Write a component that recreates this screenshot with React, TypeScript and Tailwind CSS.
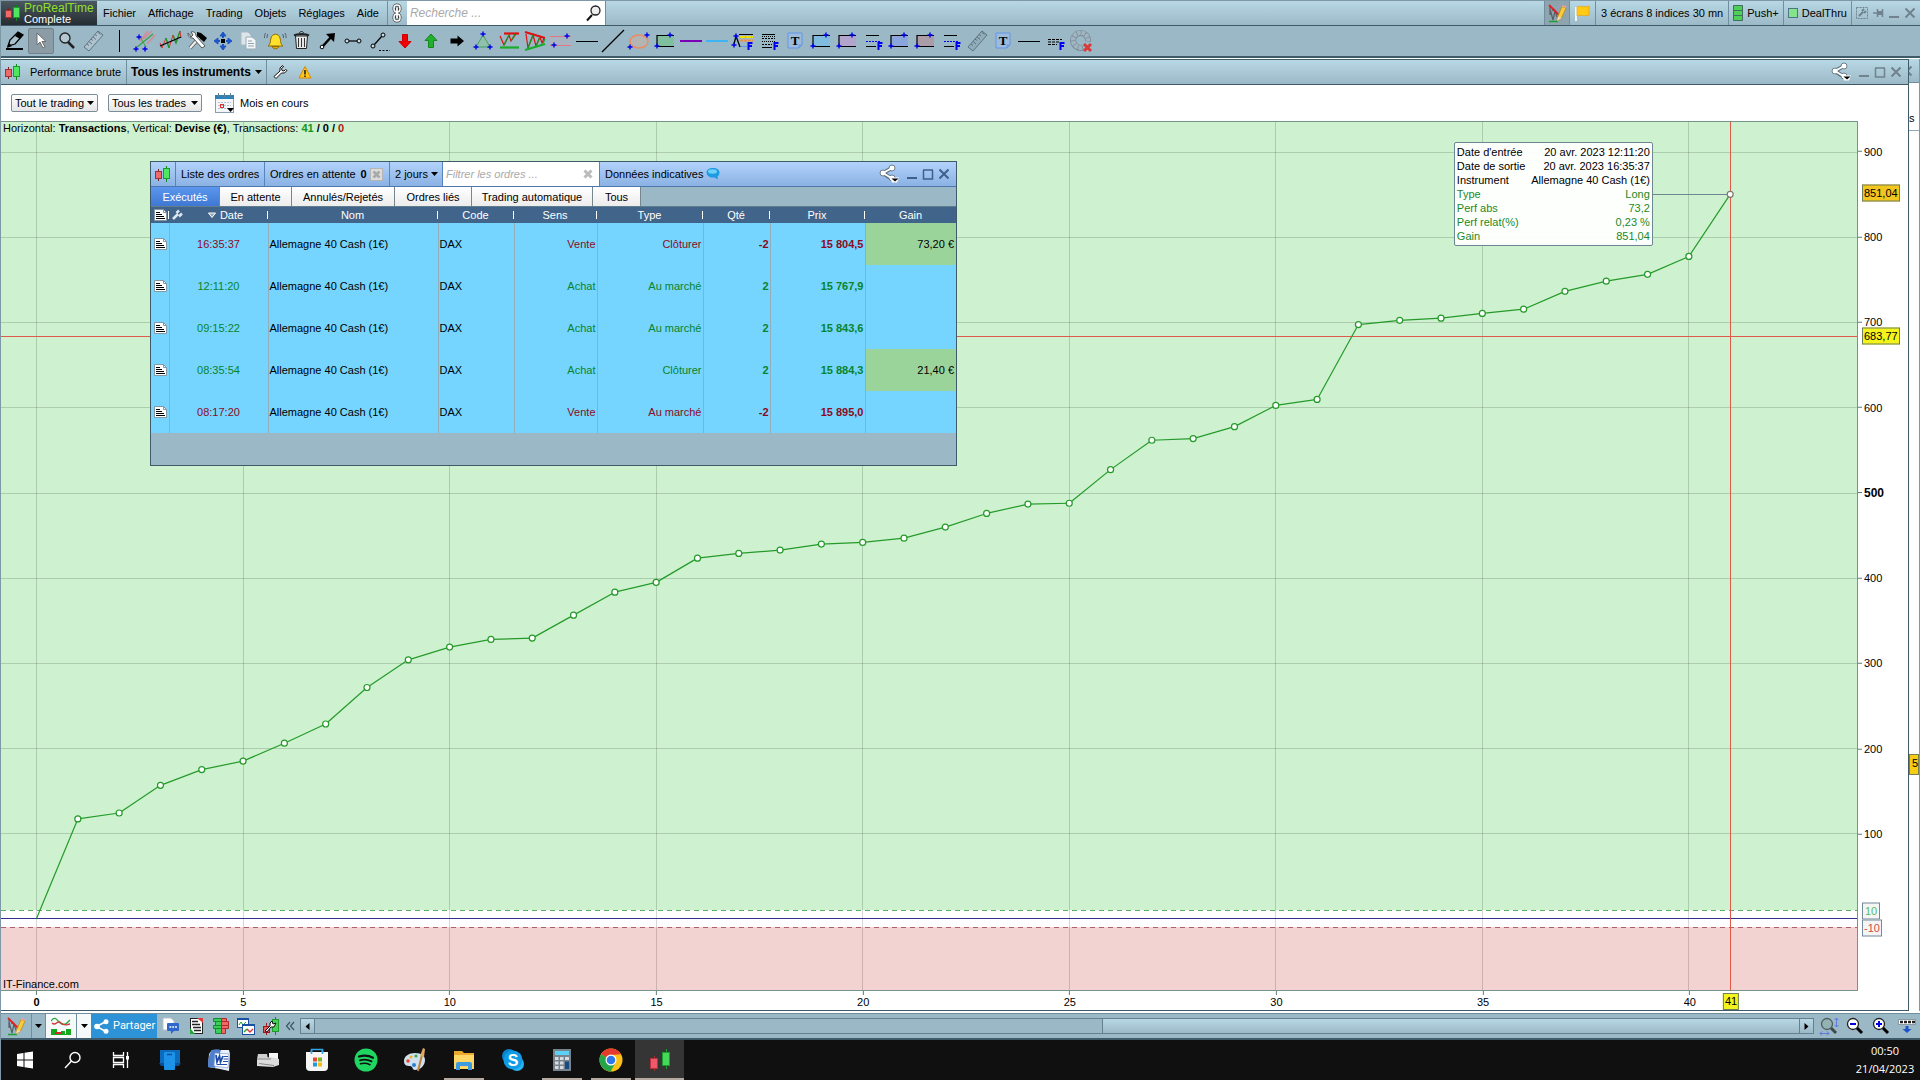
import { Fragment, type ReactNode } from "react";
import { clsx } from "clsx";

const GAINS = [
  0, 117, 124, 156.5, 175, 185, 206, 228.6, 271.5, 304, 319, 328, 329.5, 356.5, 383.5, 395, 423.5, 429, 433, 440, 442,
  447, 460, 476, 487, 488, 527.5, 562, 564, 578, 603, 610, 698, 703, 705.5, 711, 716, 737, 749, 757, 778, 851.04,
];

const Y_TOP = 936;
const Y_SPAN = 1020;
const X_LEFT = -0.86;
const X_SPAN = 44.93;

const px = (trade: number) => `${((trade - X_LEFT) / X_SPAN) * 100}%`;
const py = (value: number) => `${((Y_TOP - value) / Y_SPAN) * 100}%`;

const HEADER_BG = "bg-linear-to-b from-[#b8d8e5] to-[#9cb9c7]";

const Icon = ({ size = 24, className, children }: { size?: number; className?: string; children: ReactNode }) => (
  <svg
    width={size}
    height={size}
    viewBox={`0 0 ${size} ${size}`}
    fill="none"
    className={clsx("shrink-0", className)}
    aria-hidden="true"
  >
    {children}
  </svg>
);

/* ---------- shared icons ---------- */

const Candles = ({ className }: { className?: string }) => (
  <Icon size={18} className={className}>
    <path d="M4.500 4v12" stroke="#7d2020" />
    <rect x="1.500" y="6.500" width="6" height="7" fill="#ee6a6a" stroke="#a33030" />
    <path d="M12.500 1v16" stroke="#0d8a1c" />
    <rect x="9.500" y="3.500" width="6" height="10" fill="#4fe75f" stroke="#1d9a2c" />
  </Icon>
);

const Caret = ({ className }: { className?: string }) => (
  <svg width="7" height="4" viewBox="0 0 7 4" className={clsx("shrink-0", className)} aria-hidden="true">
    <path d="M0 0h7L3.500 4z" fill="currentColor" />
  </svg>
);

const Share = () => (
  <Icon size={20}>
    <path d="M4 9 13 4M4 9l9 6" stroke="#5b6f7b" strokeWidth="4" />
    <g fill="#fff" stroke="#6d7f8a">
      <circle cx="4" cy="9" r="3" />
      <circle cx="13" cy="4" r="3" />
      <circle cx="13" cy="14" r="3" />
    </g>
    <path d="M4 9 13 4M4 9l9 5.500" stroke="#fff" strokeWidth="2" />
    <path d="M11 13.500h9l-2 5h-5z" fill="#fff" />
    <path d="M12.500 14.500h7l-3.500 3z" fill="#000" />
  </Icon>
);

const Wrench = () => (
  <Icon size={16}>
    <path
      d="M10.500 1.500 8 4v3L2 12.500 4 14.500 9.500 9h3L15 6.500 13.500 5.500 12 7 10 6.500 9.500 4.500 11.500 3z"
      fill="#fff"
      stroke="#111"
    />
  </Icon>
);

const Sketch = () => (
  <Icon size={22}>
    <path d="M3 19.500h9" stroke="#1aa035" strokeWidth="1.500" />
    <path d="M4 5v8M4 7l3 11L9 9l3 9M9 9 6 8" stroke="#555f66" strokeWidth="1.200" />
    <path d="m3 3 10 10" stroke="#e02020" strokeWidth="1.800" />
    <path d="m11 19 1-5 4-9.500 4 1.500-4.500 10z" fill="#f9cc3c" stroke="#b98a18" strokeWidth=".8" />
    <path d="m11 19 1-4.500 3.500 1.500z" fill="#f2ddb4" />
    <path d="m16 4.500.6-1.600 4 1.500-.6 1.600z" fill="#f0a0a0" />
  </Icon>
);

const Close = ({ className }: { className?: string }) => (
  <Icon size={12} className={className}>
    <path d="m1.500 1.500 9 9M10.500 1.500l-9 9" stroke="currentColor" strokeWidth="2" />
  </Icon>
);

const Minimize = () => (
  <Icon size={12}>
    <path d="M1 10h10" stroke="currentColor" strokeWidth="2" />
  </Icon>
);

const Maximize = () => (
  <Icon size={12}>
    <path d="M1.500 2v9h9V2M1 2h10" stroke="currentColor" strokeWidth="1.500" />
  </Icon>
);

const WindowButtons = ({ className }: { className?: string }) => (
  <div className={clsx("flex items-center gap-1", className)}>
    <button type="button" aria-label="Réduire">
      <Minimize />
    </button>
    <button type="button" aria-label="Agrandir">
      <Maximize />
    </button>
    <button type="button" aria-label="Fermer">
      <Close />
    </button>
  </div>
);

/* ---------- drawing tools ---------- */

const Plus = ({ x, y }: { x: number; y: number }) => (
  <path d={`M${x - 2.5} ${y}h5M${x} ${y - 2.5}v5`} stroke="#0000e8" strokeWidth="1.400" />
);

const LetterF = () => <path d="M17.500 21v-8M16.500 14h5M17 17h4" stroke="#0000f0" strokeWidth="2" />;

const Ruler = ({ fill }: { fill: string }) => (
  <>
    <path d="M3 18 17 2l5 4L8 22z" fill={fill} stroke="#5f7480" />
    <path d="m6 15 2 1.500M8 12.500l3 2.500M10 10l2 1.500M12 8l3 2.500M14 5.500l2 1.500M16.500 3l3 2.500" stroke="#5f7480" />
  </>
);

const RectTool = ({ fill }: { fill: string }) => (
  <>
    <path d="M4 7h17v10H4z" fill={fill} />
    <path d="M21 6.500H4v11M4 17.500h17" stroke="#000" strokeWidth="1.200" />
    <Plus x={17} y={6} />
    <Plus x={4} y={17} />
  </>
);

const LinesF = () => (
  <>
    <path d="M5 6.500h13M5 17.500h10" stroke="#000" />
    <path d="M5 12.500h14" stroke="#00f" strokeDasharray="2 1" />
    <LetterF />
  </>
);

const TextTool = () => (
  <>
    <path d="M5 4h14v12l-3 3H5z" fill="#9dbcdc" stroke="#6395ea" />
    <path d="M16 19v-3h3" stroke="#6395ea" />
    <text x="12" y="16" textAnchor="middle" fontSize="13" fontWeight="700" fontFamily="Liberation Serif, serif" fill="#000">
      T
    </text>
  </>
);

const TOOLS: { label: string; draw: ReactNode }[] = [
  {
    label: "Crayon",
    draw: (
      <>
        <path d="m5 17 2-6 8-8 5 3-8 9z" fill="#a9c2ce" stroke="#000" strokeWidth="1.300" />
        <path d="m15 3 5 3-3 4-5-3z" fill="#000" />
        <path d="m4 19 2-5 3 3z" fill="#000" />
        <path d="M3 20h17" stroke="#000" strokeWidth="2" />
      </>
    ),
  },
  {
    label: "Curseur",
    draw: <path d="M8 4v12l3-3 3 6 2-1-3-5.500h4z" fill="#fff" stroke="#6c6c6c" />,
  },
  {
    label: "Loupe",
    draw: (
      <>
        <path d="m13 13 6 6" stroke="#222" strokeWidth="2.500" />
        <circle cx="10" cy="9" r="5" fill="#b5c8d1" stroke="#222" strokeWidth="1.300" />
      </>
    ),
  },
  { label: "Règle", draw: <Ruler fill="#adc4cf" /> },
  { label: "Séparateur", draw: <path d="M12.500 1v22" stroke="#000" /> },
  {
    label: "Fourchette",
    draw: (
      <>
        <path d="M7 12 15 2M10 10l9-8M14 15l8-9" stroke="#d68a96" strokeWidth="1.500" />
        <path d="m3 19 17-14" stroke="#3ba043" strokeWidth="1.200" />
        <path d="m7 8 6 10" stroke="#3ba043" />
        <Plus x={6} y={8} />
        <Plus x={3} y={20} />
        <Plus x={12} y={20} />
      </>
    ),
  },
  {
    label: "Régression",
    draw: (
      <>
        <path d="m1 14 2 5 4-10 3 10 4-13 3 8 4-12 1 7" stroke="#e03030" />
        <path d="m7 9 3 10M14 6l3 8 4-12" stroke="#1a9c2c" strokeWidth="1.300" />
        <path d="m1 17 21-9" stroke="#000" strokeWidth="1.300" />
      </>
    ),
  },
  {
    label: "Outils",
    draw: (
      <>
        <path d="m5 19 10-11" stroke="#666" strokeWidth="4" />
        <path d="m5 19 10-11" stroke="#f2f2f2" strokeWidth="2" />
        <path d="m12 3 4 1 6 5-3 4-7-6z" fill="#000" />
        <path d="M3 4c0 4 2 5 5 5l9 10 3-2L11 7c0-3-2-5-5-4l2 3-2 2z" fill="#fff" stroke="#555" />
      </>
    ),
  },
  {
    label: "Déplacer",
    draw: (
      <>
        <path d="m12 3 3 4H9zM12 21l3-4H9zM3 12l4-3v6zM21 12l-4-3v6z" fill="#1e55c4" stroke="#1e55c4" />
        <path d="M12 6v3M12 15v3M6 12h3M15 12h3" stroke="#1e55c4" strokeWidth="2" />
        <rect x="10" y="10" width="4" height="4" fill="#000" />
      </>
    ),
  },
  {
    label: "Copier",
    draw: (
      <>
        <path d="M4 3h7l3 3v10H4z" fill="#dbe5ea" stroke="#aabac3" />
        <path d="M9 8h6l4 3v9H9z" fill="#f3f7f9" stroke="#99adb8" />
        <path d="M11 12h4M11 14.500h6M11 17h6" stroke="#91a5b0" />
      </>
    ),
  },
  {
    label: "Alarme",
    draw: (
      <>
        <path d="M5 17c3-2 2-5 3-8 1-5 8-5 9 0 1 3 0 6 3 8z" fill="#ffe02c" stroke="#8d6c00" />
        <path d="M9 17.500c1 3 6 3 7 0z" fill="#e9a800" stroke="#8d6c00" />
        <path d="M5 5c-1 1-1 3-1 4M2.500 4c-1 2-1 3-1 5M19.500 5c1 1 1 3 1 4M22 4c1 2 1 3 1 5" stroke="#4f606a" />
      </>
    ),
  },
  {
    label: "Supprimer",
    draw: (
      <>
        <path d="M6.500 7h12L17.500 19.500h-10z" fill="#e8e8e8" stroke="#222" />
        <path d="M9.500 9v9M12.500 9v9M15.500 9v9" stroke="#333" />
        <path d="M5 6.500c3-2 12-2 15 0" stroke="#222" strokeWidth="2" />
        <path d="M10.500 4c0-2 4-2 4 0" stroke="#222" />
      </>
    ),
  },
  {
    label: "Flèche",
    draw: (
      <>
        <path d="m8 17 9-10" stroke="#000" strokeWidth="2.500" />
        <path d="m11 5 9-1-1 9z" fill="#000" />
        <circle cx="7" cy="18" r="1.800" fill="#fff" stroke="#000" />
      </>
    ),
  },
  {
    label: "Segment",
    draw: (
      <>
        <path d="M7 12h10" stroke="#000" strokeWidth="1.200" />
        <circle cx="6" cy="12" r="2" fill="#c5dbe5" stroke="#000" />
        <circle cx="18" cy="12" r="2" fill="#c5dbe5" stroke="#000" />
      </>
    ),
  },
  {
    label: "Demi-droite",
    draw: (
      <>
        <path d="m7 16 8-9" stroke="#000" strokeWidth="1.200" />
        <circle cx="6" cy="17" r="2" fill="#c5dbe5" stroke="#000" />
        <circle cx="16" cy="6" r="2" fill="#c5dbe5" stroke="#000" />
        <path d="M12 21.500h11" stroke="#000" strokeDasharray="2 1.500" />
      </>
    ),
  },
  { label: "Baisse", draw: <path d="M9.500 5.500h5v7H18l-6 6.500-6-6.500h3.500z" fill="#f20000" stroke="#c00" /> },
  { label: "Hausse", draw: <path d="M9.500 18.500h5v-7H18L12 5l-6 6.500h3.500z" fill="#25ad2e" stroke="#128a1d" /> },
  { label: "Flèche droite", draw: <path d="M5.500 9.500h7V6.500L19 12l-6.500 5.500v-3h-7z" fill="#000" /> },
  {
    label: "Triangle",
    draw: (
      <>
        <path d="m12 6 7 12H5z" fill="#92c0ae" stroke="#44a05a" />
        <Plus x={12} y={5} />
        <Plus x={5} y={18} />
        <Plus x={19} y={18} />
      </>
    ),
  },
  {
    label: "Rectangle automatique",
    draw: (
      <>
        <path d="M7 4.500h15" stroke="#e01010" strokeWidth="2.200" />
        <path d="m3 7 4 9 5-10 2 6 5-7" stroke="#e01010" strokeWidth="1.200" />
        <path d="m7 16 5-10M14 12l4-7" stroke="#159525" strokeWidth="1.200" />
        <path d="M3 18.500h19" stroke="#18ad28" strokeWidth="2.200" />
      </>
    ),
  },
  {
    label: "Triangle automatique",
    draw: (
      <>
        <path d="m2 3 20 6" stroke="#e01010" strokeWidth="2.200" />
        <path d="m3 5 2 14 5-13 3 11 4-9 2 6 2-5" stroke="#e01010" strokeWidth="1.200" />
        <path d="m5 19 5-13M13 17l4-9M20 14l2-4" stroke="#159525" strokeWidth="1.200" />
        <path d="m2 21 20-6" stroke="#18ad28" strokeWidth="2.200" />
      </>
    ),
  },
  {
    label: "Canal",
    draw: (
      <>
        <path d="M1 8h21v9H1z" fill="#a9b4c2" />
        <path d="M1 7.500h21M1 16.500h21" stroke="#df7880" strokeWidth="1.200" />
        <Plus x={18} y={7} />
        <Plus x={5} y={16} />
      </>
    ),
  },
  { label: "Ligne horizontale", draw: <path d="M1 12.500h22" stroke="#000" /> },
  { label: "Droite", draw: <path d="M1 23 23 1" stroke="#000" strokeWidth="1.200" /> },
  {
    label: "Ellipse",
    draw: (
      <>
        <ellipse cx="12" cy="12.500" rx="9" ry="6.500" fill="#b4b4b3" stroke="#ec8a62" strokeWidth="1.400" />
        <Plus x={20} y={6} />
        <Plus x={3} y={18} />
      </>
    ),
  },
  { label: "Rectangle vert", draw: <RectTool fill="#7fbf9e" /> },
  { label: "Ligne violette", draw: <path d="M1 12h22" stroke="#7a00b8" strokeWidth="2" /> },
  { label: "Ligne bleue", draw: <path d="M1 12h22" stroke="#3fb4f2" strokeWidth="2" /> },
  {
    label: "Fibonacci",
    draw: (
      <>
        <path d="M8 5.500h14" stroke="#000" />
        <path d="M9 8h13" stroke="#f0e000" strokeWidth="2" strokeDasharray="5 1" />
        <path d="M9 11.500h13" stroke="#e89050" strokeWidth="2" strokeDasharray="3 1" />
        <path d="M10 17.500h6" stroke="#6090f0" />
        <path d="m3 15 2-8 4 11" stroke="#000" strokeWidth="1.300" />
        <Plus x={5} y={7} />
        <Plus x={3} y={16} />
        <LetterF />
      </>
    ),
  },
  {
    label: "Retracements",
    draw: (
      <>
        <path d="M5 5.500h13M5 18.500h10" stroke="#000" />
        <path d="M5 9.500h13M5 15.500h10" stroke="#000" strokeDasharray="2 1" />
        <path d="M5 12.500h13M5 7.500h13" stroke="#000" strokeDasharray="1 1" />
        <LetterF />
      </>
    ),
  },
  { label: "Texte", draw: <TextTool /> },
  { label: "Rectangle bleu", draw: <RectTool fill="#7fbce0" /> },
  { label: "Rectangle mauve", draw: <RectTool fill="#b3a4cd" /> },
  { label: "Niveaux", draw: <LinesF /> },
  { label: "Rectangle indigo", draw: <RectTool fill="#8aa6dd" /> },
  { label: "Rectangle rose", draw: <RectTool fill="#ab9da8" /> },
  { label: "Niveaux 2", draw: <LinesF /> },
  { label: "Règle 2", draw: <Ruler fill="#91acba" /> },
  { label: "Texte 2", draw: <TextTool /> },
  { label: "Ligne 2", draw: <path d="M1 12.500h22" stroke="#000" /> },
  {
    label: "Projections",
    draw: (
      <>
        <path d="M5 10.500h14M5 13h12M5 15.500h9" stroke="#000" strokeDasharray="3 1" />
        <LetterF />
      </>
    ),
  },
  {
    label: "Réinitialiser",
    draw: (
      <>
        <path d="M14 18.500a7.500 7.500 0 1 1 5-6" stroke="#7c8e99" strokeWidth="6" />
        <path d="M13 18.500a7.500 7.500 0 1 1 6-6.500" stroke="#9fb5c1" strokeWidth="4.500" strokeDasharray="3.500 .8" />
        <path d="m15 15 7 7M22 15l-7 7" stroke="#d93a3a" strokeWidth="3" />
      </>
    ),
  },
];

/* ---------- top of the application ---------- */

const MENUS = ["Fichier", "Affichage", "Trading", "Objets", "Réglages", "Aide"];

const MenuBar = () => (
  <header className={clsx("flex h-[25px] shrink-0 items-stretch border-b border-[#3f5a68]", HEADER_BG)}>
    <div className="flex w-24 items-center gap-0.5 bg-linear-to-b from-[#4b5860] to-[#252d32] pl-[3px]">
      <Candles />
      <div>
        <div className="text-xs leading-[11px] text-[#8fe02a]">ProRealTime</div>
        <div className="leading-[10px] text-white">Complete</div>
      </div>
    </div>
    <nav className="flex items-center gap-3 pr-2 pl-1.5">
      {MENUS.map((menu) => (
        <button key={menu} type="button">
          {menu}
        </button>
      ))}
    </nav>
    <button type="button" aria-label="Lier" className="flex w-5 items-center justify-center border-l border-[#6f8f9f]">
      <svg width="10" height="20" viewBox="0 0 10 20" fill="none" aria-hidden="true">
        <path d="M5 5v10" stroke="#333" strokeWidth="4" />
        <rect x="2" y="2" width="6" height="7" rx="3" stroke="#444" strokeWidth="3" />
        <rect x="2" y="11" width="6" height="7" rx="3" stroke="#444" strokeWidth="3" />
        <rect x="2" y="2" width="6" height="7" rx="3" stroke="#fff" strokeWidth="1.500" />
        <rect x="2" y="11" width="6" height="7" rx="3" stroke="#fff" strokeWidth="1.500" />
        <path d="M5 5v10" stroke="#fff" strokeWidth="1.800" />
      </svg>
    </button>
    <label className="flex w-[199px] items-center border-r border-[#6f8f9f] bg-white pr-0.5">
      <input
        type="text"
        aria-label="Recherche"
        placeholder="Recherche ..."
        className="min-w-0 flex-1 pl-[3px] text-xs italic outline-none placeholder:text-[#a9a9a9]"
      />
      <Icon size={18}>
        <path d="m7 11-5 5.500" stroke="#111" strokeWidth="2" />
        <circle cx="10.500" cy="6.500" r="4.500" fill="#eee" stroke="#222" strokeWidth="1.300" />
      </Icon>
    </label>
    <div className="ml-auto flex items-stretch">
      <button
        type="button"
        aria-label="Dessin"
        className="flex w-[26px] items-center justify-center border-x border-[#6f8f9f] bg-[#8ea5b0]"
      >
        <Sketch />
      </button>
      <button type="button" aria-label="Drapeau" className="flex w-[25px] items-center justify-center">
        <Icon size={18}>
          <path d="M3 3v14" stroke="#f4f4f4" strokeWidth="2" />
          <path d="M4 3c4-2 5 1 12-1v9c-6 2-8-1-12 1z" fill="#ffc914" stroke="#e59a00" strokeWidth=".6" />
        </Icon>
      </button>
      <button type="button" className="border-l border-[#6f8f9f] px-[5px]">
        3 écrans 8 indices 30 mn
      </button>
      <button type="button" className="flex items-center gap-1 border-l border-[#6f8f9f] px-1">
        <svg width="10" height="16" viewBox="0 0 10 16" aria-hidden="true">
          <path d="M.5.500h9v15h-9zM.5 5.500h9M.5 10.500h9" fill="#4fcf55" stroke="#3f6f60" />
        </svg>
        Push+
      </button>
      <button type="button" className="flex items-center gap-1 border-l border-[#6f8f9f] px-1">
        <span className="size-[10px] border border-[#4f7488] bg-[#84e48a]" />
        DealThru
      </button>
      <div className="flex items-center gap-1 border-l border-[#6f8f9f] px-1 text-[#70828d]">
        <Icon size={12}>
          <rect x=".5" y=".5" width="11" height="11" stroke="currentColor" strokeDasharray="2 1" />
          <path d="m3 9 4-4M6 4l2-2M8 6l2-2" stroke="currentColor" strokeWidth="2" />
        </Icon>
        <Icon size={12}>
          <path d="M1 6h4M5.500 2v8M10.500 2v8" stroke="currentColor" strokeWidth="1.500" />
          <path d="M6 4h5v4H6z" fill="currentColor" />
        </Icon>
        <Minimize />
        <Close />
      </div>
    </div>
  </header>
);

const ToolBar = () => (
  <div className="flex h-8 shrink-0 items-center overflow-hidden border-b-2 border-[#3f5a68] bg-[#9ab8c6] pl-px">
    {TOOLS.map(({ label, draw }, i) => (
      <button
        key={label}
        type="button"
        aria-label={label}
        className={clsx(
          "flex h-[26px] w-[26px] shrink-0 items-center justify-center",
          i === 1 && "rounded-xs border border-[#71828b] bg-[#8b9ca6]"
        )}
      >
        <Icon>{draw}</Icon>
      </button>
    ))}
  </div>
);

/* ---------- performance window ---------- */

const FilterSelect = ({ label, width }: { label: string; width: string }) => (
  <div className={clsx("relative flex h-[18px] items-center", width)}>
    <select
      aria-label={label}
      className="h-full w-full appearance-none rounded-xs border border-[#7a8d98] bg-linear-to-b from-white to-[#e6e6e6] pl-[3px] outline-none"
    >
      <option>{label}</option>
    </select>
    <Caret className="pointer-events-none absolute right-1" />
  </div>
);

const X_TICKS = [0, 5, 10, 15, 20, 25, 30, 35, 40];
const Y_TICKS = [100, 200, 300, 400, 500, 600, 700, 800, 900];

const Plot = () => (
  <svg className="absolute inset-0 h-full w-full" aria-label="Performance brute">
    <rect width="100%" height="100%" fill="#fff" />
    <rect width="100%" height={py(10)} fill="#cef2cf" />
    <rect y={py(-10)} width="100%" height={`${((Y_SPAN - Y_TOP - 10) / Y_SPAN) * 100}%`} fill="#f3d3d2" />
    <g stroke="#000" strokeOpacity=".16" shapeRendering="crispEdges">
      {X_TICKS.map((t) => (
        <line key={t} x1={px(t)} x2={px(t)} y1="0" y2="100%" />
      ))}
      {Y_TICKS.map((v) => (
        <line key={v} x1="0" x2="100%" y1={py(v)} y2={py(v)} />
      ))}
    </g>
    <g shapeRendering="crispEdges">
      <line x1="0" x2="100%" y1={py(10)} y2={py(10)} stroke="#58b060" strokeDasharray="5 4" />
      <line x1="0" x2="100%" y1={py(-10)} y2={py(-10)} stroke="#b0606c" strokeDasharray="5 4" />
      <line x1="0" x2="100%" y1={py(0)} y2={py(0)} stroke="#30308c" />
      <line x1="0" x2="100%" y1={py(683.77)} y2={py(683.77)} stroke="#e05a4c" />
      <line x1={px(41)} x2={px(41)} y1="0" y2="100%" stroke="#e05a4c" />
      <line x1={px(38.5)} x2={px(41)} y1={py(851.04)} y2={py(851.04)} stroke="#6c8791" />
    </g>
    {GAINS.slice(1).map((v, i) => (
      <line key={i} x1={px(i)} y1={py(GAINS[i])} x2={px(i + 1)} y2={py(v)} stroke="#259a2a" strokeWidth="1.200" />
    ))}
    {GAINS.slice(1).map((v, i) => (
      <circle
        key={i}
        cx={px(i + 1)}
        cy={py(v)}
        r="3"
        fill="#fff"
        stroke={i === 40 ? "#7b7b70" : "#259a2a"}
        strokeWidth="1.200"
      />
    ))}
  </svg>
);

const TRADE_DETAILS = [
  ["Date d'entrée", "20 avr. 2023 12:11:20"],
  ["Date de sortie", "20 avr. 2023 16:35:37"],
  ["Instrument", "Allemagne 40 Cash (1€)"],
  ["Type", "Long"],
  ["Perf abs", "73,2"],
  ["Perf relat(%)", "0,23 %"],
  ["Gain", "851,04"],
];

const TradeTooltip = () => (
  <dl className="absolute top-5 right-[11%] grid w-[199px] grid-cols-[max-content_1fr] rounded-xs border border-[#6c8791] bg-white/95 px-0.5 py-0.5 leading-[14px]">
    {TRADE_DETAILS.map(([name, value], i) => (
      <Fragment key={name}>
        <dt className={clsx(i > 2 && "text-[#1c8a24]")}>{name}</dt>
        <dd className={clsx("text-right", i > 2 && "text-[#1c8a24]")}>{value}</dd>
      </Fragment>
    ))}
  </dl>
);

const YAxis = () => (
  <div className="relative w-[50px] shrink-0">
    {Y_TICKS.map((v) => (
      <div key={v} className="absolute left-0 flex -translate-y-1/2 items-center gap-0.5" style={{ top: py(v) }}>
        <span className="h-px w-1 bg-[#5d7f78]" />
        <span className={clsx(v === 500 && "text-xs font-bold")}>{v}</span>
      </div>
    ))}
    <span
      className="absolute left-1 -translate-y-1/2 border border-[#6f7f5c] bg-[#f3c51f] px-px leading-[15px]"
      style={{ top: py(851.04) }}
    >
      851,04
    </span>
    <span
      className="absolute left-1 -translate-y-1/2 border border-[#6f7f5c] bg-[#f4f41c] px-px leading-[15px]"
      style={{ top: py(683.77) }}
    >
      683,77
    </span>
    <span
      className="absolute left-1 -translate-y-1/2 border border-[#74899b] bg-[#f5f5f5] px-0.5 leading-[15px] text-[#58c060]"
      style={{ top: py(10) }}
    >
      10
    </span>
    <span
      className="absolute left-1 -translate-y-1/2 border border-[#74899b] bg-[#f5f5f5] px-px leading-[15px] text-[#d24c4c]"
      style={{ top: py(-10) }}
    >
      -10
    </span>
  </div>
);

const XAxis = () => (
  <div className="mr-[50px] h-[19px] shrink-0">
    <div className="relative h-full">
      {X_TICKS.map((t) => (
        <div key={t} className="absolute top-0 flex -translate-x-1/2 flex-col items-center" style={{ left: px(t) }}>
          <span className="h-1 w-px bg-[#5d7f78]" />
          <span className={clsx("leading-[15px]", t === 0 && "font-bold")}>{t}</span>
        </div>
      ))}
      <span
        className="absolute top-0.5 -translate-x-1/2 border border-[#6f7f5c] bg-[#f4f41c] px-px leading-[15px]"
        style={{ left: px(41) }}
      >
        41
      </span>
    </div>
  </div>
);

/* ---------- orders window ---------- */

const TABS = [
  { name: "Exécutés", width: "w-[69px]" },
  { name: "En attente", width: "w-[72px]" },
  { name: "Annulés/Rejetés", width: "w-[103px]" },
  { name: "Ordres liés", width: "w-[77px]" },
  { name: "Trading automatique", width: "w-[121px]" },
  { name: "Tous", width: "w-[48px]" },
];

const COLUMNS = [
  { name: "Date", width: "w-[99px]" },
  { name: "Nom", width: "w-[170px]" },
  { name: "Code", width: "w-[76px]" },
  { name: "Sens", width: "w-[83px]" },
  { name: "Type", width: "w-[106px]" },
  { name: "Qté", width: "w-[67px]" },
  { name: "Prix", width: "w-[95px]" },
  { name: "Gain", width: "w-[91px]" },
];

const ORDERS = [
  { time: "16:35:37", side: "Vente", type: "Clôturer", qty: "-2", price: "15 804,5", gain: "73,20 €", down: true },
  { time: "12:11:20", side: "Achat", type: "Au marché", qty: "2", price: "15 767,9", gain: "", down: false },
  { time: "09:15:22", side: "Achat", type: "Au marché", qty: "2", price: "15 843,6", gain: "", down: false },
  { time: "08:35:54", side: "Achat", type: "Clôturer", qty: "2", price: "15 884,3", gain: "21,40 €", down: false },
  { time: "08:17:20", side: "Vente", type: "Au marché", qty: "-2", price: "15 895,0", gain: "", down: true },
];

const Sheet = ({ className }: { className?: string }) => (
  <svg width="13" height="12" viewBox="0 0 13 12" fill="none" className={className} aria-hidden="true">
    <path d="M.5.500h9l3 3v8H.5z" fill="#fff" stroke="#8497a3" />
    <path d="M9.500.500v3h3" stroke="#8497a3" />
    <path d="M2 3.500h4M2 5.500h6M2 7.500h8M2 9.500h9" stroke="#000" />
  </svg>
);

const OrdersWindow = () => (
  <section
    aria-label="Liste des ordres"
    className="absolute top-[39px] left-[149px] w-[807px] border border-[#3f5a68] bg-[#9ab8c6]"
  >
    <div className="flex h-[25px] items-stretch border-b border-[#4c78ad] bg-linear-to-b from-[#b2d2fb] to-[#8bb2e4]">
      <div className="flex w-6 items-center pl-[3px]">
        <Candles />
      </div>
      <div className="flex w-[90px] items-center border-x border-[#5585bd] pl-[5px]">Liste des ordres</div>
      <div className="flex w-[124px] items-center pl-[5px]">
        Ordres en attente <b className="ml-[5px]">0</b>
        <button type="button" aria-label="Annuler les ordres" className="ml-[3px]">
          <Icon size={13}>
            <rect x=".5" y=".5" width="12" height="12" fill="#dcdcdc" stroke="#b5b5b5" />
            <path d="m3.500 3.500 6 6M9.500 3.500l-6 6" stroke="#a8a8a8" strokeWidth="2.500" />
          </Icon>
        </button>
      </div>
      <button type="button" className="flex w-[53px] items-center gap-[3px] border-l border-[#5585bd] pl-[5px]">
        2 jours <Caret />
      </button>
      <label className="flex w-[158px] items-center border-x border-[#5585bd] bg-white pr-1.5">
        <input
          type="text"
          aria-label="Filtrer les ordres"
          placeholder="Filtrer les ordres ..."
          className="min-w-0 flex-1 pl-[3px] text-[11px] italic outline-none placeholder:text-[#a9a9a9]"
        />
        <Icon size={10}>
          <path d="m1.500 1.500 7 7M8.500 1.500l-7 7" stroke="#bcbcbc" strokeWidth="3" />
        </Icon>
      </label>
      <div className="flex items-center gap-[3px] pl-[5px]">
        Données indicatives
        <Icon size={14}>
          <path d="M7 1c4 0 6.500 2 6.500 4.500 0 1.500-.7 3-2 4l.5 3-3.500-2C3.500 11 .5 8.500.5 5.500.5 3 3 1 7 1z" fill="#1c9be2" />
          <ellipse cx="6.500" cy="4.500" rx="4.500" ry="2.200" fill="#6fd0f8" />
        </Icon>
      </div>
      <div className="ml-auto flex items-center gap-[7px] pr-1.5 text-[#3d608d]">
        <button type="button" aria-label="Partager la liste">
          <Share />
        </button>
        <WindowButtons />
      </div>
    </div>

    <div role="tablist" className="flex h-5 items-stretch border-b border-[#5f7d8c]">
      {TABS.map(({ name, width }, i) => (
        <button
          key={name}
          type="button"
          role="tab"
          aria-selected={i === 0}
          className={clsx(
            "border-r border-[#75868f] pt-0.5",
            width,
            i === 0
              ? "bg-linear-to-b from-[#5b97ee] to-[#3f78d2] text-white"
              : "bg-linear-to-b from-white to-[#ececec]"
          )}
        >
          {name}
        </button>
      ))}
    </div>

    <table className="w-full table-fixed border-collapse">
      <thead className="bg-[#41648b] text-white">
        <tr className="h-4">
          <th aria-label="Note" className="w-[18px] p-0">
            <div className="flex h-2 items-center border-r border-white pl-[3px]">
              <Sheet />
            </div>
          </th>
          {COLUMNS.map(({ name, width }, i) => (
            <th key={name} className={clsx("p-0 font-normal", width)}>
              <div className={clsx("flex h-2 items-center justify-center", i < 7 && "border-r border-white")}>
                {i === 0 && (
                  <>
                    <Icon size={12} className="mr-[25px]">
                      <path d="m2 10 5-5M5.500 4 8 1.500M8 7.500 11 4.500" stroke="#dce6ee" strokeWidth="2.500" />
                    </Icon>
                    <Icon size={8} className="mr-1">
                      <path d="M.5 2h7L4 6.500z" stroke="#fff" fill="#8fa6bd" />
                    </Icon>
                  </>
                )}
                <span className={clsx(i === 0 && "mr-[22px]")}>{name}</span>
              </div>
            </th>
          ))}
        </tr>
      </thead>
      <tbody className="bg-[#75d5ff]">
        {ORDERS.map(({ time, side, type, qty, price, gain, down }) => (
          <tr
            key={time}
            className={clsx(
              "h-[42px] *:border-r *:border-[#94adba] *:p-0 *:last:border-r-0",
              down ? "text-[#8c0a1c]" : "text-[#08842c]"
            )}
          >
            <td>
              <Sheet className="ml-[3px]" />
            </td>
            <td className="text-center">{time}</td>
            <td className="text-black">
              <span className="pl-px">Allemagne 40 Cash (1€)</span>
            </td>
            <td className="text-black">
              <span className="pl-px">DAX</span>
            </td>
            <td className="text-right">
              <span className="pr-px">{side}</span>
            </td>
            <td className="text-right">
              <span className="pr-px">{type}</span>
            </td>
            <td className="text-right font-bold">
              <span className="pr-px">{qty}</span>
            </td>
            <td className="text-right font-bold">
              <span className="pr-px">{price}</span>
            </td>
            <td className={clsx("text-right text-black", gain && "bg-[#9bd49b]")}>
              <span className="pr-0.5">{gain}</span>
            </td>
          </tr>
        ))}
      </tbody>
    </table>
    <div className="h-8" />
  </section>
);

const PerformanceWindow = () => (
  <main className="flex min-w-0 flex-1 flex-col border-t border-r border-b border-[#3f5a68] bg-white">
    <div className={clsx("flex h-[25px] shrink-0 items-stretch border-b border-[#3f5a68]", HEADER_BG)}>
      <div className="flex w-[125px] items-center gap-2 pl-[3px]">
        <Candles />
        <h1>Performance brute</h1>
      </div>
      <button type="button" className="flex items-center gap-1 border-x border-[#6f8f9f] px-1 text-xs font-bold">
        Tous les instruments <Caret />
      </button>
      <button type="button" aria-label="Réglages" className="ml-[3px] px-0.5">
        <Wrench />
      </button>
      <button type="button" aria-label="Avertissement" className="ml-1.5 px-0.5">
        <Icon size={14}>
          <path d="M7 1.500 13 13H1z" fill="#ffc61c" stroke="#d88a00" strokeLinejoin="round" />
          <path d="M7 5v4.500M7 10.500v1.500" stroke="#222" strokeWidth="1.600" />
        </Icon>
      </button>
      <div className="ml-auto flex items-center gap-[7px] pr-1.5 text-[#70828d]">
        <button type="button" aria-label="Partager">
          <Share />
        </button>
        <WindowButtons />
      </div>
    </div>

    <div className="flex h-9 shrink-0 items-center pl-[10px]">
      <FilterSelect label="Tout le trading" width="w-[87px]" />
      <FilterSelect label="Tous les trades" width="ml-[10px] w-[94px]" />
      <button type="button" className="ml-3 flex items-center gap-[5px]">
        <Icon size={21}>
          <rect x="1.500" y="3.500" width="18" height="16" fill="#f4f7f9" stroke="#8aa0ae" />
          <rect x="1" y="2" width="19" height="4" fill="#2b83bd" />
          <path d="M4.500 0v4M10.500 0v4M16.500 0v4" stroke="#6b7c87" />
          <path d="M4 9.500h13M4 12.500h13M4 15.500h10" stroke="#b5c1c9" strokeDasharray="2 1" />
          <rect x="6.500" y="11.500" width="3" height="3" stroke="#e03030" />
          <path d="M13 15h7l-3.500 4z" fill="#000" />
        </Icon>
        Mois en cours
      </button>
    </div>

    <div className="flex min-h-0 flex-1">
      <div className="relative flex-1 border-t border-r border-b border-[#76958a]">
        <Plot />
        <p className="relative pl-0.5 leading-[12px]">
          Horizontal: <b>Transactions</b>, Vertical: <b>Devise (€)</b>, Transactions: <b className="text-[#159520]">41</b>
          <b> / 0 / </b>
          <b className="text-[#b01818]">0</b>
        </p>
        <span className="absolute bottom-0 left-0.5 leading-[11px]">IT-Finance.com</span>
        <OrdersWindow />
        <TradeTooltip />
      </div>
      <YAxis />
    </div>
    <XAxis />
  </main>
);

/* ---------- bottom bars ---------- */

const Magnifier = ({ children, faded }: { children?: ReactNode; faded?: boolean }) => (
  <Icon size={20} className={clsx(faded && "opacity-60")}>
    <path d="m11 11 6 6" stroke="#000" strokeWidth="3" />
    <circle cx="8" cy="8" r="5.500" fill={faded ? "#8fb0a8" : "#fff"} stroke="#222" strokeWidth="1.300" />
    {children}
  </Icon>
);

const BottomBar = () => (
  <div className="flex h-[27px] shrink-0 items-stretch border-t border-b-2 border-t-[#6f8f9f] border-b-[#3f5a68] bg-[#9ab8c6]">
    <button type="button" aria-label="Dessin" className="flex w-[30px] items-center justify-center">
      <Sketch />
    </button>
    <button
      type="button"
      aria-label="Options de dessin"
      className="flex w-[15px] items-center justify-center border-x border-[#6f8f9f]"
    >
      <Caret />
    </button>
    <button type="button" aria-label="Indicateurs" className="flex w-[30px] items-center justify-center bg-[#f6f9fa]">
      <Icon size={20}>
        <path d="M0 5c5-7 7 2 11 3s5-1 8-4" stroke="#2ba53a" strokeWidth="1.300" />
        <path d="M1 7c4 4 5-4 9 0s6 1 9 1" stroke="#cf3a3a" strokeWidth="1.300" />
        <path d="M0 13h6v6H0zM10 15h4v4h-4zM15 13h5v6h-5z" fill="#13a81d" />
        <path d="M4 16h7v3H4z" fill="#d02a2a" />
        <path d="M0 18.500h20" stroke="#13a81d" />
      </Icon>
    </button>
    <button
      type="button"
      aria-label="Options des indicateurs"
      className="flex w-[15px] items-center justify-center border-l border-[#6f8f9f] bg-[#f6f9fa]"
    >
      <Caret />
    </button>
    <button
      type="button"
      className="flex w-[66px] items-center gap-1 bg-[#2e92d6] pl-[3px] font-[Roboto,sans-serif] text-white"
    >
      <Icon size={15}>
        <path d="M2.500 7.500 12 2.500M2.500 7.500l9.500 5" stroke="#fff" strokeWidth="1.500" />
        <circle cx="3" cy="7.500" r="2.800" fill="#fff" />
        <circle cx="12" cy="2.800" r="2.500" fill="#fff" />
        <circle cx="12" cy="12.200" r="2.500" fill="#fff" />
      </Icon>
      Partager
    </button>
    <div className="flex items-center gap-[7px] pl-[5px]">
      <Icon size={18}>
        <path d="M1 1h8l3 3v9H1z" fill="#fff" stroke="#b7c3ca" />
        <path d="M6 6h10q1 0 1 1v6q0 1-1 1h-4l-3 3v-3H6q-1 0-1-1V7q0-1 1-1z" fill="#2f66cc" />
        <path d="M7.500 10h8" stroke="#fff" strokeWidth="1.600" strokeDasharray="1.800 1" />
      </Icon>
      <Icon size={18}>
        <rect x="3.500" y="1.500" width="12" height="15" fill="#fff" stroke="#222" />
        <path d="M5 4.500h6M5 7.500h8M6 10.500h8M7 13.500h7" stroke="#222" strokeWidth="1.300" />
        <path d="M10 1h6v5z" fill="#e03a3a" />
        <path d="M3 11v6h5z" fill="#20a838" />
      </Icon>
      <Icon size={18}>
        <path d="M1.500 1.500h8v3h-8zM3.500 4.500h6v4h-6zM1.500 8.500h8v3h-8zM3.500 11.500h6v5h-6z" fill="#38d05a" stroke="#158a30" />
        <path d="M9.500 1.500h5v3h-5zM9.500 4.500h7v4h-7zM9.500 8.500h7v3h-7zM9.500 11.500h4v5h-4z" fill="#ee6a6a" stroke="#b02a2a" />
      </Icon>
      <Icon size={18}>
        <rect x=".5" y="1.500" width="11" height="9" fill="#fff" stroke="#1d4fa0" />
        <path d="M0 2h12" stroke="#1d4fa0" strokeWidth="2" />
        <path d="m2 8 2-3 2 3 3-3" stroke="#25a035" />
        <rect x="5.500" y="7.500" width="12" height="10" fill="#fff" stroke="#1d4fa0" />
        <path d="M5 8h13" stroke="#1d4fa0" strokeWidth="2" />
        <path d="m7 15 3-3" stroke="#25a035" strokeWidth="1.400" />
        <path d="m10 12 3 3 3-3" stroke="#e03030" strokeWidth="1.400" />
      </Icon>
      <Icon size={18}>
        <path d="M13.500 0v18" stroke="#0d8a1c" />
        <rect x="10.500" y="2.500" width="6" height="12" fill="#45d056" stroke="#1d9a2c" />
        <path d="M4.500 6v12" stroke="#a01818" />
        <rect x="1.500" y="9.500" width="6" height="6" fill="#e85a5a" stroke="#a01818" />
        <path d="m3 14 5-5V6l2-2 1 3 3-1-2 4H9l-4 5z" fill="#fff" stroke="#111" />
      </Icon>
    </div>
    <button type="button" aria-label="Replier" className="flex w-5 items-center justify-center text-[#3d5663]">
      <Icon size={10}>
        <path d="M5 1 1.500 5 5 9M9 1 5.500 5 9 9" stroke="currentColor" strokeWidth="1.200" />
      </Icon>
    </button>
    <div className="my-1 flex min-w-0 flex-1 items-stretch border border-[#648190]">
      <button
        type="button"
        aria-label="Défiler à gauche"
        className={clsx("flex w-[14px] items-center justify-center border-r border-[#648190]", HEADER_BG)}
      >
        <Icon size={7}>
          <path d="M5.500 0v7L1.500 3.500z" fill="#000" />
        </Icon>
      </button>
      <div className="flex flex-1 justify-end">
        <div className={clsx("w-[47%] border-l border-[#648190]", HEADER_BG)} />
      </div>
      <button
        type="button"
        aria-label="Défiler à droite"
        className={clsx("flex w-[14px] items-center justify-center border-l border-[#648190]", HEADER_BG)}
      >
        <Icon size={7}>
          <path d="M1.500 0v7l4-3.500z" fill="#000" />
        </Icon>
      </button>
    </div>
    <div className="flex items-center gap-1.5 pr-[3px] pl-[5px]">
      <Magnifier faded>
        <path d="M17.500 2v9M15.500 4l2-2 2 2M15.500 9l2 2 2-2M1 17.500h9M3 15.500l-2 2 2 2M8 15.500l2 2-2 2" stroke="#3a50e8" />
      </Magnifier>
      <Magnifier>
        <path d="M5 8h6" stroke="#00d" strokeWidth="2" />
      </Magnifier>
      <Magnifier>
        <path d="M5 8h6M8 5v6" stroke="#00d" strokeWidth="2" />
      </Magnifier>
      <Icon size={20}>
        <rect x="1.500" y="3.500" width="17" height="5" fill="#fff" stroke="#8a9aa3" />
        <path d="M3 6h15" stroke="#222" strokeWidth="2.500" strokeDasharray="3 1" />
        <path d="M8.500 10h3v3h3L10 17l-4.500-4h3z" fill="#1d55c8" />
      </Icon>
    </div>
  </div>
);

const APPS: { name: string; running?: boolean; draw: ReactNode }[] = [
  {
    name: "Démarrer",
    draw: (
      <path
        d="m4 6 6.500-1v6.500H4zM11.500 4.800 20 3.500v8h-8.500zM4 12.500h6.500V19L4 18zM11.500 12.500H20v8l-8.500-1.300z"
        fill="#fff"
      />
    ),
  },
  {
    name: "Rechercher",
    draw: (
      <>
        <circle cx="14" cy="9.500" r="5" stroke="#fff" strokeWidth="1.400" />
        <path d="m10.500 13-6.500 7" stroke="#fff" strokeWidth="1.400" />
      </>
    ),
  },
  {
    name: "Vue des tâches",
    draw: (
      <>
        <path d="M4.500 4v3.500h10V4M4.500 20v-3.500h10V20M4.500 9.500h10v5h-10zM18.500 4v16" stroke="#fff" strokeWidth="1.300" />
        <path d="M17 8h3v3.500h-3z" fill="#fff" />
      </>
    ),
  },
  {
    name: "Mobile",
    draw: (
      <>
        <path d="M2 2h20v14H2z" fill="#0d6bbd" />
        <path d="M1 15h22l-2 3H3z" fill="#0a4f93" />
        <rect x="6" y="4" width="11" height="18" rx="1" fill="#1c93e8" />
        <path d="M9 6.500h5" stroke="#0a4f93" strokeWidth="1.500" />
      </>
    ),
  },
  {
    name: "Word",
    draw: (
      <>
        <path d="M5 2h17l1 4-1 17-9-2-12-2 1-13z" fill="#e9f0fa" />
        <path d="M5 2c3-1 6-1 9 0L8 20l-7-1C1 12 2 6 5 2z" fill="#4f7ecb" />
        <path d="m8 5 14 1-1 14-14-2z" fill="#fff" stroke="#7a9ad4" strokeWidth=".7" />
        <path d="m9 7 1 7 2.500-6 1 6L16 8" stroke="#1f4ca8" strokeWidth="1.800" />
        <path d="M16.500 8.500H21M16.500 11H21M16 13.500h5M10 16.500h10" stroke="#1f4ca8" strokeWidth="1.200" />
      </>
    ),
  },
  {
    name: "Imprimante",
    draw: (
      <>
        <path d="M2 6h9l1 5H1z" fill="#d0d0d0" />
        <path d="M13 5h9v7h-9z" fill="#f7f7f7" />
        <path d="m1 11 14-2 8 2v6l-6 2-16-1z" fill="#dcdcdc" />
        <path d="m3 15.500 15 2M1 11h14" stroke="#888" />
      </>
    ),
  },
  {
    name: "Store",
    draw: (
      <>
        <path d="M6.500 6V1.500h11V6" stroke="#35a6e8" strokeWidth="1.600" />
        <path d="M1 4h22v15q0 4-4 4H5q-4 0-4-4z" fill="#f5f5f5" />
        <path d="M6.500 2.500V6M17.500 2.500V6" stroke="#35a6e8" strokeWidth="1.600" />
        <path d="M8 9.500h4v4H8z" fill="#e64a2e" />
        <path d="M13 9.500h4v4h-4z" fill="#7ab829" />
        <path d="M8 14.500h4v4H8z" fill="#1f9ae0" />
        <path d="M13 14.500h4v4h-4z" fill="#fbb813" />
      </>
    ),
  },
  {
    name: "Spotify",
    draw: (
      <>
        <circle cx="12" cy="12" r="11.500" fill="#1fd660" />
        <path d="M5 8.500c5-1.500 10-1 14 1.200" stroke="#111" strokeWidth="2.200" strokeLinecap="round" />
        <path d="M6 12.300c4-1.200 8-.8 11.500 1" stroke="#111" strokeWidth="1.900" strokeLinecap="round" />
        <path d="M6.500 15.800c3.500-.9 6.500-.6 9.500.9" stroke="#111" strokeWidth="1.600" strokeLinecap="round" />
      </>
    ),
  },
  {
    name: "Paint",
    draw: (
      <>
        <path d="M12 5c7 0 10 3 10 7 0 6-5 10-10 10-3 0-2-4-5-4-4 0-6-1-6-5 0-5 5-8 11-8z" fill="#cfe0ee" />
        <circle cx="5" cy="13" r="1.800" fill="#e24a3a" />
        <circle cx="8" cy="9" r="1.600" fill="#f3b020" />
        <circle cx="13" cy="8" r="1.600" fill="#38a84a" />
        <circle cx="11" cy="17" r="2" fill="#2b7fd6" />
        <path d="m15 23 4-16" stroke="#c08040" strokeWidth="2" />
        <path d="m17 8 3-8 2 1-1 8z" fill="#e0a860" />
      </>
    ),
  },
  {
    name: "Explorateur",
    running: true,
    draw: (
      <>
        <path d="M2 3h8l2 2h10v3H2z" fill="#e9a92c" />
        <path d="M2 7h20v14H2z" fill="#ffd766" />
        <path d="M4 22v-6q0-2 2-2h12q2 0 2 2v6h-4v-4H8v4z" fill="#3c9be0" />
      </>
    ),
  },
  {
    name: "Skype",
    draw: (
      <>
        <circle cx="8" cy="8" r="7" fill="#0a84d0" />
        <circle cx="16" cy="16" r="7" fill="#27b4f2" />
        <circle cx="12" cy="12" r="9.500" fill="#0f9be6" />
        <text x="12" y="17.500" textAnchor="middle" fontSize="16" fontWeight="700" fill="#fff">
          S
        </text>
      </>
    ),
  },
  {
    name: "Calculatrice",
    running: true,
    draw: (
      <>
        <rect x="3" y="1" width="18" height="22" fill="#77838c" />
        <path d="M5 3h14v4H5z" fill="#5cd0f5" />
        <path
          d="M5 9h3.500v3H5zM10 9h3.500v3H10zM15 9h4v3h-4zM5 13.500h3.500v3H5zM10 13.500h3.500v3H10zM5 18h3.500v3H5zM10 18h3.500v3H10z"
          fill="#d5dbe0"
        />
        <path d="M15 13.500h4V21h-4z" fill="#164a80" />
      </>
    ),
  },
  {
    name: "Chrome",
    running: true,
    draw: (
      <>
        <circle cx="12" cy="12" r="11.500" fill="#fbc116" />
        <path d="M12 12 2 6.300A11.500 11.500 0 0 1 22 6.300L12 7z" fill="#e33b2e" />
        <path d="M12 12 2 6.300A11.500 11.500 0 0 0 11.500 23.500l5-8.800z" fill="#25a548" />
        <circle cx="12" cy="12" r="5.500" fill="#fff" />
        <circle cx="12" cy="12" r="4.300" fill="#2f76e8" />
      </>
    ),
  },
  {
    name: "ProRealTime",
    running: true,
    draw: (
      <>
        <path d="M6.500 8v15" stroke="#a33030" />
        <rect x="2.500" y="10.500" width="7" height="10" fill="#ee5a6a" stroke="#b83040" />
        <path d="M18.500 1v20" stroke="#1d9a2c" />
        <rect x="14.500" y="4.500" width="7" height="13" fill="#45d85a" stroke="#1d9a2c" />
      </>
    ),
  },
];

const TaskBar = () => (
  <footer className="flex h-10 shrink-0 items-stretch bg-[#101010]">
    {APPS.map(({ name, running, draw }, i) => (
      <button
        key={name}
        type="button"
        aria-label={name}
        className={clsx(
          "flex shrink-0 flex-col items-center justify-between pt-2",
          i < 3 ? "w-12" : "w-[49px]",
          name === "ProRealTime" && "bg-[#353535]"
        )}
      >
        <Icon>{draw}</Icon>
        {running && <span className={clsx("h-0.5 bg-[#b5a9a2]", name === "ProRealTime" ? "w-full" : "w-10")} />}
      </button>
    ))}
    <div className="ml-auto flex w-[70px] flex-col items-center justify-center font-['Open_Sans',sans-serif] leading-[18px] text-white">
      <time>00:50</time>
      <time>21/04/2023</time>
    </div>
  </footer>
);

/* edge of the window that sits behind the performance window */
const BackWindow = () => (
  <aside className="relative flex w-[11px] shrink-0 flex-col overflow-hidden border-r border-[#7f98a5] bg-white">
    <div className={clsx("flex h-6 shrink-0 items-center border-b border-[#6f8f9f] text-[#70828d]", HEADER_BG)}>
      <Close className="-ml-2" />
    </div>
    <div className="flex h-12 shrink-0 items-end border-b border-[#8fa9b5] pb-1">s</div>
    <span className="absolute top-[73%] left-0 h-[21px] w-full border border-[#7a7f50] bg-[#f7cc12] pl-0.5">5</span>
  </aside>
);

export default function App() {
  return (
    <div className="flex h-screen flex-col overflow-hidden border-t border-l border-[#7f98a5] bg-white font-['Liberation_Sans',Arial,sans-serif] text-[11px] text-black">
      <MenuBar />
      <ToolBar />
      <div className="flex min-h-0 flex-1 pt-px pb-0.5">
        <PerformanceWindow />
        <BackWindow />
      </div>
      <BottomBar />
      <TaskBar />
    </div>
  );
}
